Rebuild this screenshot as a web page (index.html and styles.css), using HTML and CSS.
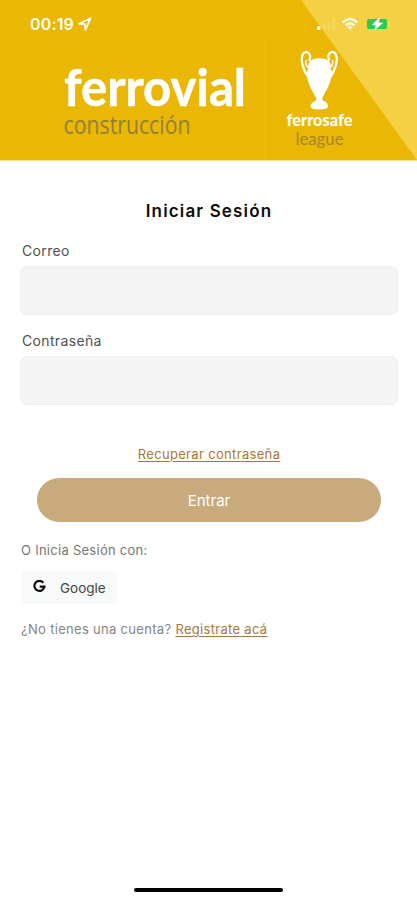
FILE: index.html
```html
<!DOCTYPE html>
<html lang="es">
<head>
<meta charset="utf-8">
<meta name="viewport" content="width=device-width, initial-scale=1">
<title>Iniciar Sesión</title>
<link rel="stylesheet" href="styles.css">
</head>
<body>
<div class="screen">
  <header class="banner">
    <svg class="corner" viewBox="0 0 116 160" preserveAspectRatio="none"><path d="M0 0H116V160Z"/></svg>
    <div class="status">
      <span class="time">00:19</span>
      <svg class="arrow" width="14" height="14" viewBox="0 0 14 14"><path d="M1.2 6.8 12.6 1.2 7.4 12.8 6.8 7.2Z" fill="none" stroke="#fff" stroke-width="1.7" stroke-linejoin="round"/></svg>
      <svg class="indicators" width="76" height="18" viewBox="0 0 76 18">
        <rect x="1" y="11" width="3.5" height="4" rx="1.5" fill="#fffbe8"/>
        <g fill="#fff" opacity=".14"><rect x="6.5" y="9" width="3" height="6" rx="1"/><rect x="11.5" y="6.500" width="3" height="8.500" rx="1"/><rect x="16.500" y="4" width="3" height="11" rx="1"/></g>
        <g fill="none" stroke="#fffdf0" stroke-width="2.300"><path d="M26.800 7.300Q34 .8 41.400 7.300M29.700 10.300Q34 6.400 38.500 10.300"/></g>
        <path d="M31.500 12.200Q34.100 10 36.700 12.200L34.100 15Z" fill="#fffdf0"/>
        <rect x="51" y="4" width="20" height="10" rx="2" fill="#22cf50"/>
        <path d="M73 7v4q2-2 0-4Z" fill="#fff" opacity=".5"/>
        <path d="M63.500 2.800 56.500 9.800H60.500L58.500 15.200 66.500 8H62.300Z" fill="#fff" stroke="#fff" stroke-width=".8"/>
      </svg>
    </div>
    <div class="brands">
      <svg class="brand" width="190" height="104" viewBox="60 46 190 104">
        <text class="name" x="64" y="106" textLength="182" lengthAdjust="spacingAndGlyphs">ferrovial</text>
        <text class="unit" x="63.500" y="134" textLength="127" lengthAdjust="spacingAndGlyphs">construcción</text>
      </svg>
      <span class="divider"></span>
      <svg class="league" width="76" height="108" viewBox="282 46 76 108">
        <g fill="none" stroke="#fff" stroke-width="2.300" stroke-linecap="round">
          <path d="M309.500 60C312 53 306 50 303.300 53.500C299.500 59 303.500 71 308.500 77.500"/>
          <path d="M306 60.500Q305 65 308.800 68" stroke-width="1.600"/>
          <path d="M329 60C326.500 53 332.500 50 335.300 53.500C339 59 335 71 330 77.500"/>
          <path d="M332.500 60.500Q333.500 65 329.700 68" stroke-width="1.600"/>
        </g>
        <path fill="#fff" d="M312.500 59.500Q319.500 57 326.500 59.500Q332 62 330.300 68.500Q333 71 331.500 76C330 86 325 92 322.500 97.500Q321.500 100.500 325 101.500Q328 103 328 107Q327 109.500 319.300 109.500T310.500 107Q310.500 103 314 101.500Q317 100.500 316 97.500C313 92 308.500 86 307 76Q306 71 308.700 68.500Q307 62 312.500 59.500Z"/>
        <text class="safe" x="286.500" y="126" textLength="66" lengthAdjust="spacingAndGlyphs">ferrosafe</text>
        <text class="sub" x="295.500" y="145" textLength="48" lengthAdjust="spacingAndGlyphs">league</text>
      </svg>
    </div>
  </header>
  <main class="form">
    <h1>Iniciar Sesión</h1>
    <label class="correo" for="mail">Correo</label>
    <input id="mail" type="email">
    <label class="contra" for="pass">Contraseña</label>
    <input id="pass" type="password">
    <a class="recover" href="#">Recuperar contraseña</a>
    <button class="enter" type="button">Entrar</button>
    <p class="with">O Inicia Sesión con:</p>
    <button class="google" type="button">
      <svg width="13" height="13" viewBox="0 0 13 13"><path d="M10.300 2.700A5 5 0 1 0 11.400 6.600H6.700" fill="none" stroke="#080808" stroke-width="2.200"/></svg>
      <span>Google</span>
    </button>
    <p class="register"><span class="ask">¿No tienes una cuenta?</span> <a href="#">Registrate acá</a></p>
  </main>
  <div class="home"></div>
</div>
</body>
</html>
```
FILE: styles.css
```css
* { box-sizing: border-box; }
body { margin: 0; background: #fff; font-family: Inter, "Liberation Sans", sans-serif; }
.screen { width: 417px; height: 900px; display: flex; flex-direction: column; overflow: hidden; }

.banner { position: relative; flex: none; height: 161px; background: #eab705; border-bottom: 1px solid #f5df8c; }
.corner { position: absolute; top: 0; right: 0; width: 116px; height: 160px; fill: #f4d045; }
.status { position: relative; display: flex; align-items: center; height: 42px; padding: 6px 25px 0 30px; }
.time { color: #fffdf0; font-size: 16px; font-weight: 600; letter-spacing: .15px; line-height: 20px; }
.arrow { margin-left: 4px; }
.indicators { margin-left: auto; }
.brands { position: relative; display: flex; height: 118px; padding-left: 60px; }
.brand { margin-top: 4px; }
.divider { width: 1px; margin-left: 15px; background: #eec030; }
.league { margin: 4px 0 0 16px; }
.brand, .league { overflow: visible; }
.brands text { font-family: Lato, "Open Sans", sans-serif; }
.name { font-size: 52px; font-weight: 700; fill: #fff; stroke: #fff; stroke-width: .5px; stroke-linejoin: round; }
.brands .unit { font-family: "Open Sans", Lato, sans-serif; font-size: 25px; fill: #948039; }
.brands .safe { font-size: 17px; font-weight: 900; fill: #fffdf0; }
.brands .sub { font-size: 17px; fill: #a58829; }

.form { display: flex; flex-direction: column; flex: 1; padding: 0 19px 0 20px; }
h1 { margin: 39px 0 0; text-align: center; font-size: 17px; line-height: 22px; font-weight: 600; letter-spacing: 1.15px; color: #0c0c0c; }
label { display: block; padding-left: 2px; font-size: 14px; line-height: 18px; letter-spacing: .35px; color: #505050; }
.correo { margin-top: 20px; }
.contra { margin-top: 17px; }
input { display: block; width: 100%; height: 49px; margin: 6px 0 0; border: 1px solid #eee; border-radius: 7px; background: #f5f5f5; outline: none; }
a { color: #a8783a; text-decoration: underline; text-underline-offset: 2px; }
.recover { align-self: center; margin-top: 40px; font-size: 13px; line-height: 18px; letter-spacing: .33px; }
.enter { height: 44px; margin: 15px 17px 0; padding: 2px 0 0; border: 0; border-radius: 22px; background: #c9aa7c; color: #fff; font: 400 15px/20px Inter, sans-serif; }
.with { margin: 19px 0 0; padding-left: 1px; font-size: 13px; line-height: 18px; letter-spacing: .27px; color: #777; }
.google { display: flex; align-items: center; width: 95px; height: 33px; margin: 12px 0 0 2px; padding: 0 0 0 11px; border: 0; border-radius: 4px; background: #f8f9f9; color: #444; font: 400 13.5px/18px Inter, sans-serif; }
.google svg { margin-bottom: 3px; }
.google span { margin-left: 14px; }
.register { margin: 16px 0 0; padding-left: 1px; font-size: 13px; line-height: 18px; letter-spacing: .31px; color: #858585; white-space: nowrap; }
.home { flex: none; align-self: center; width: 149px; height: 4px; margin: 0 0 8px; border-radius: 2px; background: #000; }
```
